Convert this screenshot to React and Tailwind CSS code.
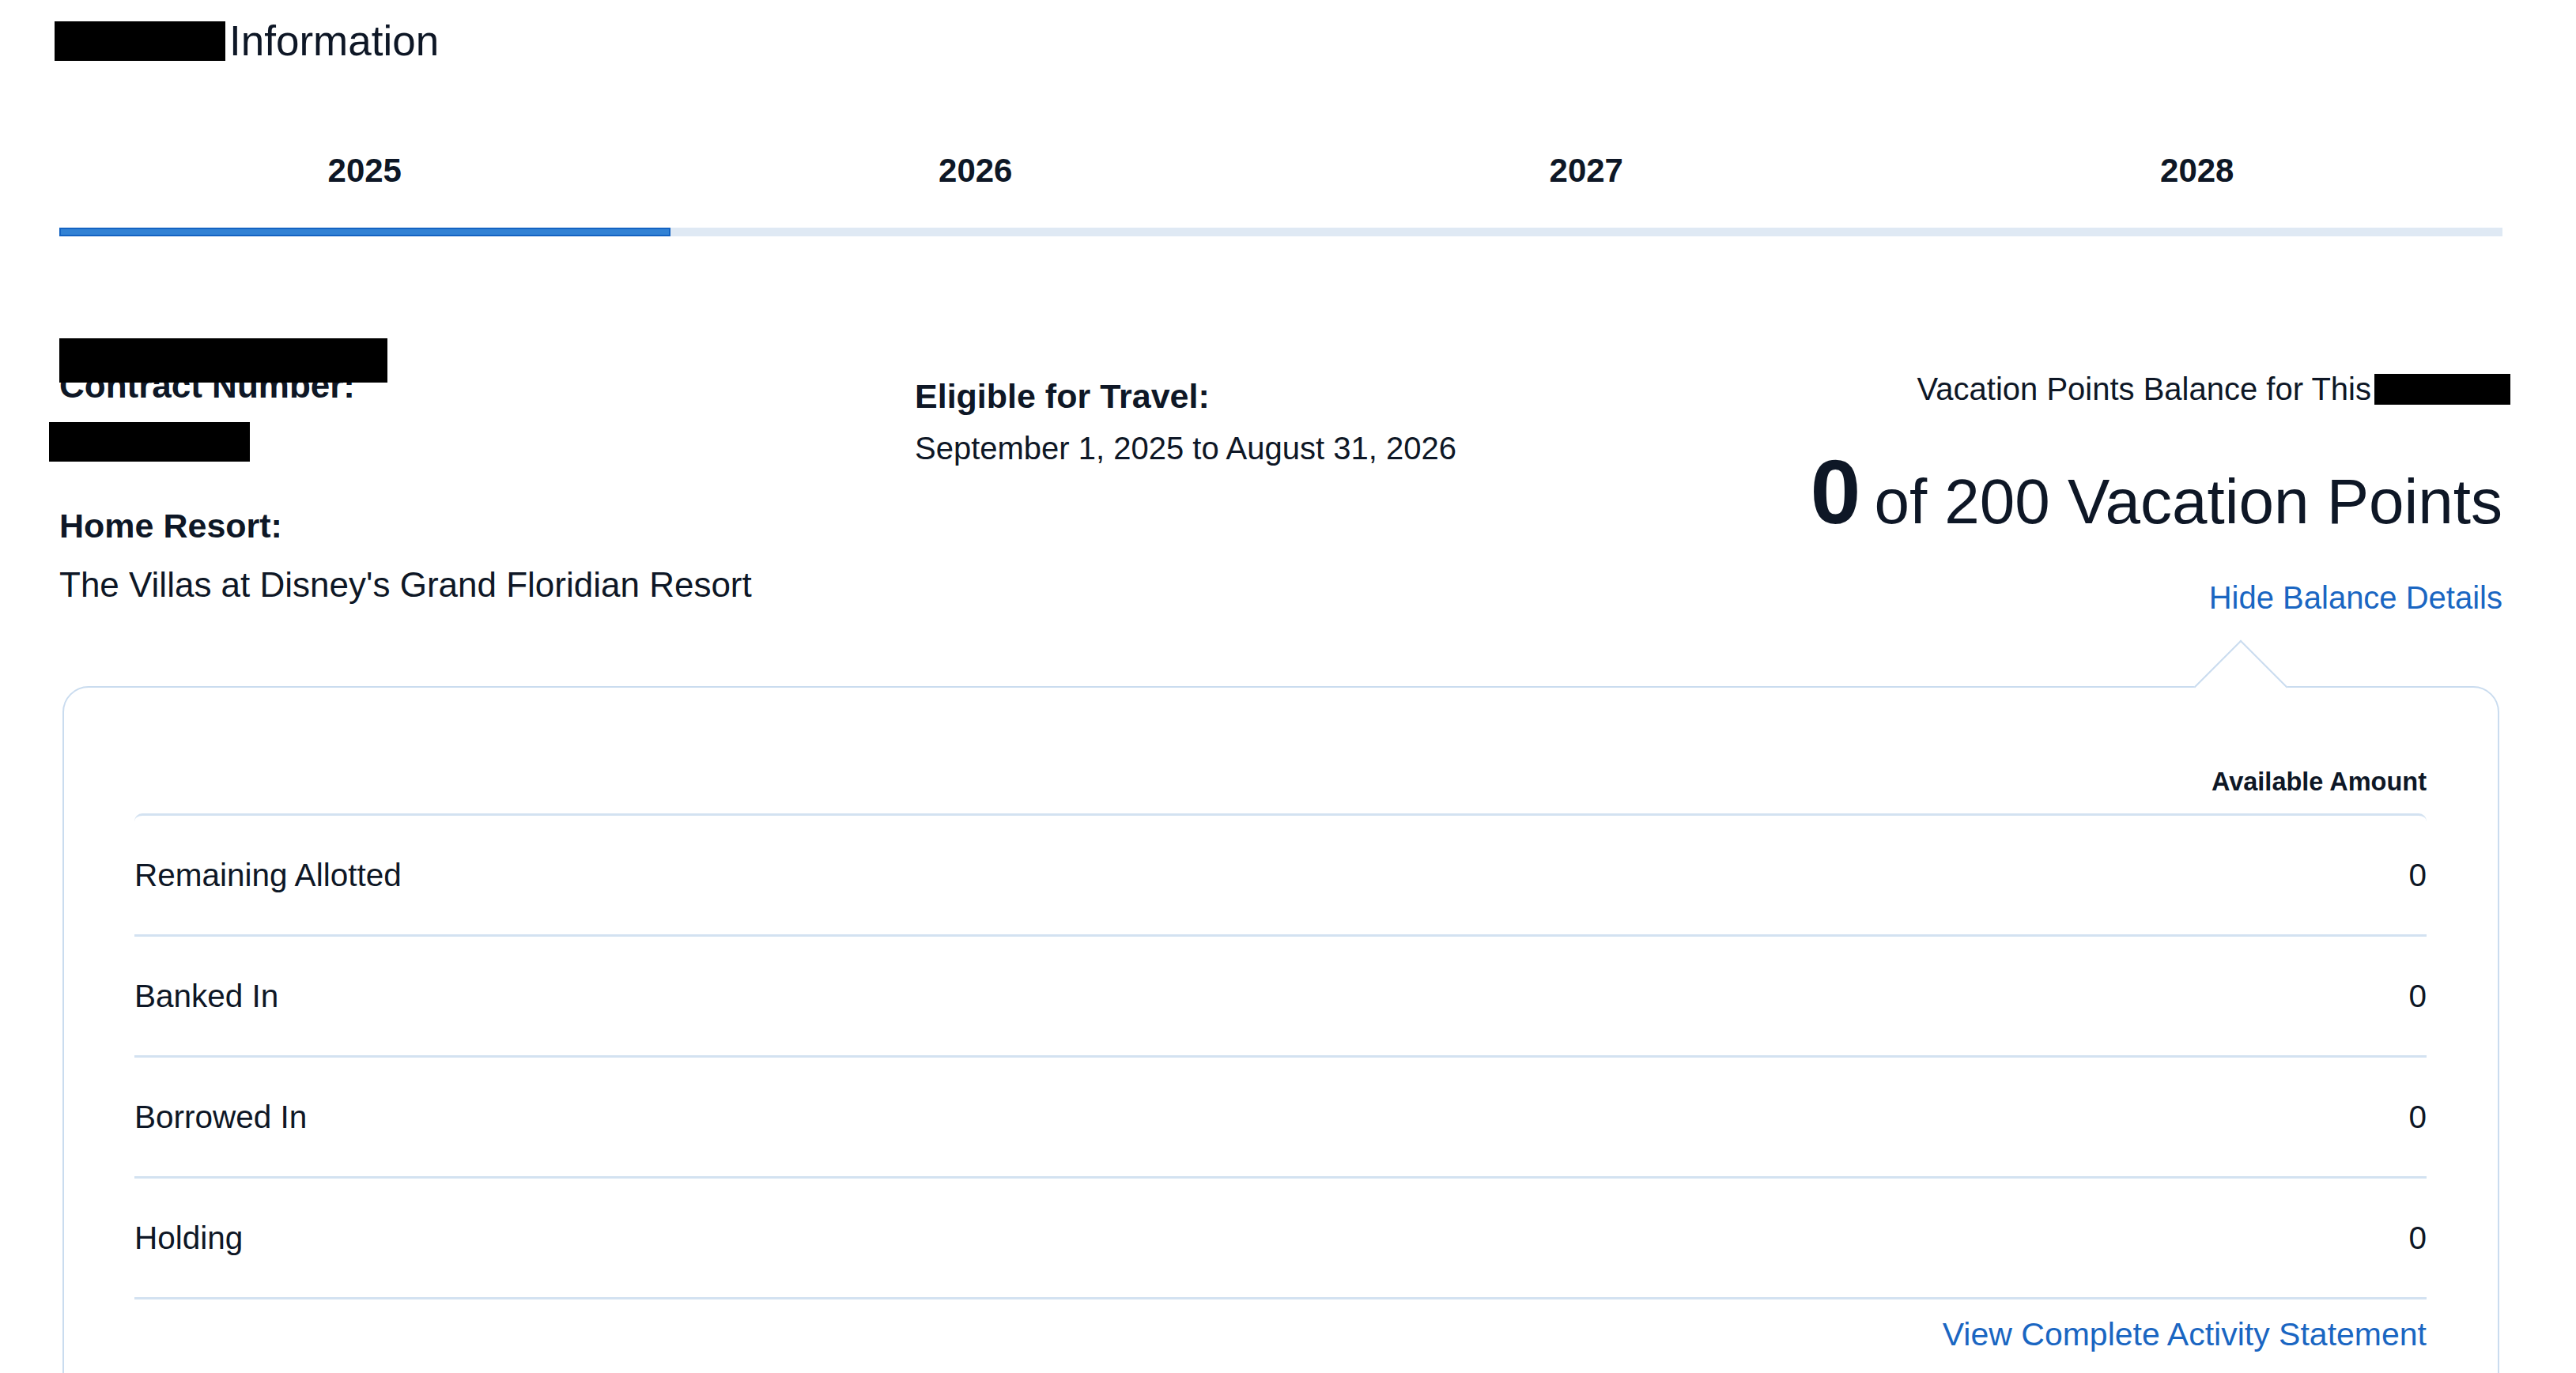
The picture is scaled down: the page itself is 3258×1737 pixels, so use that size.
import React, { useState } from 'react';

const YEARS = ['2025', '2026', '2027', '2028'];

const ROWS = [
  { label: 'Remaining Allotted', value: 0 },
  { label: 'Banked In', value: 0 },
  { label: 'Borrowed In', value: 0 },
  { label: 'Holding', value: 0 },
];

function Redacted({ className }) {
  return <span className={`block bg-black ${className}`} />;
}

export default function App() {
  const [year, setYear] = useState('2025');
  const [showDetails, setShowDetails] = useState(true);

  return (
    <div className="min-h-screen bg-white font-['Liberation_Sans',Arial,sans-serif] text-[#0e1726] pl-[75px] pr-[93px] pt-[21px]">
      {/* Title */}
      <h1 className="flex items-center -ml-[6px] text-[53px] leading-[62px] font-normal">
        <Redacted className="w-[216px] h-[50px] mr-[5px]" />
        Information
      </h1>

      {/* Year tabs */}
      <div className="grid grid-cols-4 mt-[109px]">
        {YEARS.map((y) => (
          <button
            key={y}
            onClick={() => setYear(y)}
            className="flex flex-col items-stretch"
          >
            <span className="h-[48px] text-[42px] leading-[48px] font-bold text-center">{y}</span>
            <span
              className={
                y === year
                  ? 'mt-[48px] h-[11px] bg-[#3282d5] border-2 border-[#1463c2]'
                  : 'mt-[48px] h-[11px] bg-[#dfe9f4]'
              }
            />
          </button>
        ))}
      </div>

      {/* Contract info */}
      <div className="flex mt-[129px]">
        <div className="w-[1082px] shrink-0">
          <div className="relative pt-[34px]">
            <div className="text-[44px] leading-[52px] font-bold">Contract Number:</div>
            <Redacted className="absolute top-0 left-0 w-[415px] h-[56px]" />
          </div>
          <Redacted className="mt-[20px] -ml-[13px] w-[254px] h-[50px]" />
          <div className="mt-[55px] text-[43px] leading-[52px] font-bold">Home Resort:</div>
          <div className="mt-[23px] text-[44px] leading-[52px]">
            The Villas at Disney's Grand Floridian Resort
          </div>
        </div>

        <div className="pt-[47px]">
          <div className="text-[43px] leading-[52px] font-bold">Eligible for Travel:</div>
          <div className="mt-[16px] text-[40px] leading-[48px]">
            September 1, 2025 to August 31, 2026
          </div>
        </div>

        <div className="flex-1 flex flex-col items-end pt-[40px]">
          <div className="flex items-center -mr-[10px] text-[40px] leading-[48px]">
            Vacation Points Balance for This
            <Redacted className="ml-[4px] w-[172px] h-[39px]" />
          </div>
          <div className="flex items-baseline mt-[49px]">
            <span className="text-[115px] leading-none font-bold">0</span>
            <span className="ml-[17px] text-[80px] leading-none">of 200 Vacation Points</span>
          </div>
          <button
            onClick={() => setShowDetails(!showDetails)}
            className="mt-[52px] text-[40px] leading-[48px] text-[#1a66c2]"
          >
            {showDetails ? 'Hide Balance Details' : 'Show Balance Details'}
          </button>
        </div>
      </div>

      {/* Balance details */}
      {showDetails && (
        <div className="relative mt-[88px] mx-[4px] border-2 border-[#cadcef] rounded-[33px] pt-[99px] pl-[89px] pr-[90px] pb-[64px]">
          <span className="absolute top-[-43px] right-[283px] w-[84px] h-[84px] rotate-45 bg-white border-l-2 border-t-2 border-[#cadcef]" />

          <div className="relative text-right text-[32.5px] leading-[40px] font-bold">Available Amount</div>

          <div className="relative mt-[20px] border-t-[3px] border-[#d3e2f1] rounded-t-[10px]">
            {ROWS.map((row) => (
              <div
                key={row.label}
                className="flex items-center justify-between h-[153px] border-b-[3px] border-[#d3e2f1] text-[40.5px]"
              >
                <span>{row.label}</span>
                <span>{row.value}</span>
              </div>
            ))}
          </div>

          <div className="relative mt-[20px] text-right">
            <a href="#" className="text-[41px] leading-[48px] text-[#1a66c2]">
              View Complete Activity Statement
            </a>
          </div>
        </div>
      )}
    </div>
  );
}
